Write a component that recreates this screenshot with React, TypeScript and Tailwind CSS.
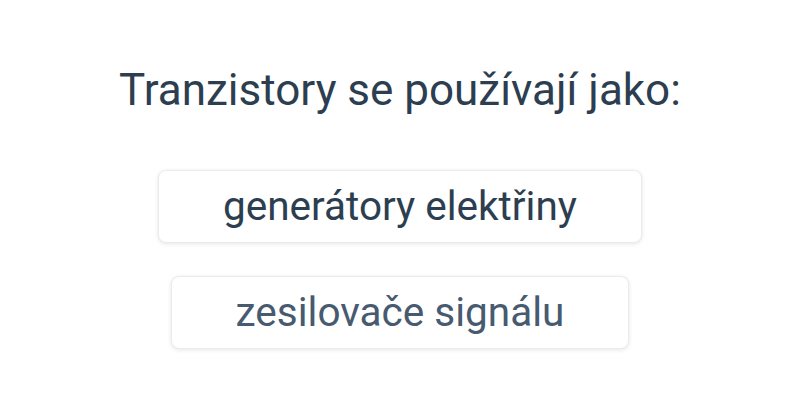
export default function App() {
  const options = [
    { label: 'generátory elektřiny', tone: 'text-[#2c3e50]' },
    { label: 'zesilovače signálu', tone: 'text-[#475a70]' },
  ];

  return (
    <div className="w-[800px] h-[400px] bg-white flex flex-col items-center pt-[62px] font-['Roboto',sans-serif]">
      <h1 className="text-[44px] leading-[56px] text-[#2c3e50] font-normal">Tranzistory se používají jako:</h1>

      <div className="mt-[52px] flex flex-col items-center gap-[33px]">
        {options.map((o) => (
          <button
            key={o.label}
            className={`h-[73px] px-[64px] bg-white rounded-[8px] border border-[#ebebeb] shadow-[0_1px_4px_rgba(0,0,0,0.1)] text-[40.5px] leading-none ${o.tone}`}
          >
            {o.label}
          </button>
        ))}
      </div>
    </div>
  );
}
